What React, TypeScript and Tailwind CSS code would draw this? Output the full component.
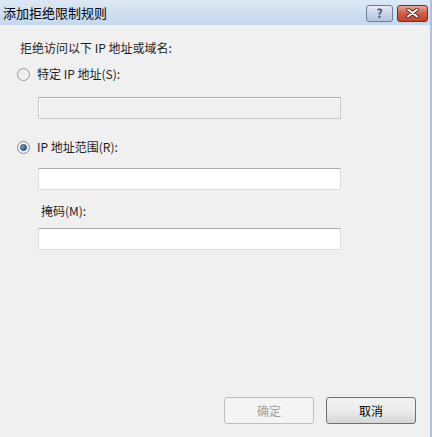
export default function App() {
  return (
    <div className="w-[432px] h-[437px] flex flex-col bg-[#f0f0f0] border-r-2 border-[#a9c4e2] text-[12px] text-[#1e1e1e] font-['Microsoft_YaHei','Noto_Sans_CJK_SC',sans-serif] overflow-hidden">
      {/* title bar */}
      <div className="h-[25px] flex items-center justify-between bg-gradient-to-b from-[#dce8f5] to-[#c4d8ee] pl-[3px] pr-[2px]">
        <span className="text-[13px] text-black leading-none">添加拒绝限制规则</span>
        <div className="flex gap-[4px] items-center pt-[1px]">
          <div className="w-[27px] h-[17px] rounded-[3px] border border-[#6d7f98] bg-gradient-to-b from-[#e6eef8] via-[#c6d4e6] to-[#b5c7de] flex items-center justify-center text-[12px] font-bold text-[#3e4f66] leading-none">
            ?
          </div>
          <div className="w-[31px] h-[17px] rounded-[3px] border border-[#7d2b22] bg-gradient-to-b from-[#e8a394] via-[#cf5d45] to-[#c0422c] flex items-center justify-center">
            <svg width="13" height="10" viewBox="0 0 13 10">
              <path d="M2 1.5 L11 8.5 M11 1.5 L2 8.5" stroke="#5a1a12" strokeWidth="3.6" strokeLinecap="round" />
              <path d="M2 1.5 L11 8.5 M11 1.5 L2 8.5" stroke="#ffffff" strokeWidth="2" strokeLinecap="round" />
            </svg>
          </div>
        </div>
      </div>

      {/* body */}
      <div className="flex-1 flex flex-col pl-[20px] pt-[15px]">
        <div className="leading-[16px]">拒绝访问以下 IP 地址或域名:</div>

        <label className="flex items-center mt-[10px] -ml-[3px] leading-[16px]">
          <span className="w-[13px] h-[13px] rounded-full border border-[#9a9a9a] bg-gradient-to-br from-[#e8e8e8] to-[#f8f8f8] mr-[7px]" />
          特定 IP 地址(S):
        </label>
        <div className="ml-[18px] mt-[15px] w-[303px] h-[22px] border border-[#c9c9c9] border-t-[#acacac] bg-[#f0f0f0] shadow-[inset_1px_1px_0_#fff]" />

        <label className="flex items-center mt-[20px] -ml-[3px] leading-[16px]">
          <span className="w-[13px] h-[13px] rounded-full border border-[#8a8a8a] bg-[#f4f4f4] mr-[7px] flex items-center justify-center">
            <span className="w-[7px] h-[7px] rounded-full bg-gradient-to-br from-[#7fc3f0] to-[#0b4b86] border border-[#18406b]" />
          </span>
          IP 地址范围(R):
        </label>
        <div className="ml-[18px] mt-[13px] w-[303px] h-[22px] border border-[#dcdcdc] border-t-[#acacac] bg-white" />

        <div className="ml-[21px] mt-[13px] leading-[16px]">掩码(M):</div>
        <div className="ml-[18px] mt-[9px] w-[303px] h-[22px] border border-[#dcdcdc] border-t-[#acacac] bg-white" />

        <div className="flex-1" />
        <div className="flex justify-end gap-[12px] pr-[14px] mb-[13px]">
          <div className="w-[90px] h-[27px] rounded-[3px] border border-[#bfbfbf] bg-[#f4f4f4] flex items-center justify-center text-[#a0a0a0]">
            确定
          </div>
          <div className="w-[90px] h-[27px] rounded-[3px] border border-[#707070] bg-gradient-to-b from-[#f2f2f2] via-[#ebebeb] to-[#d6d6d6] flex items-center justify-center text-black">
            取消
          </div>
        </div>
      </div>
    </div>
  );
}
